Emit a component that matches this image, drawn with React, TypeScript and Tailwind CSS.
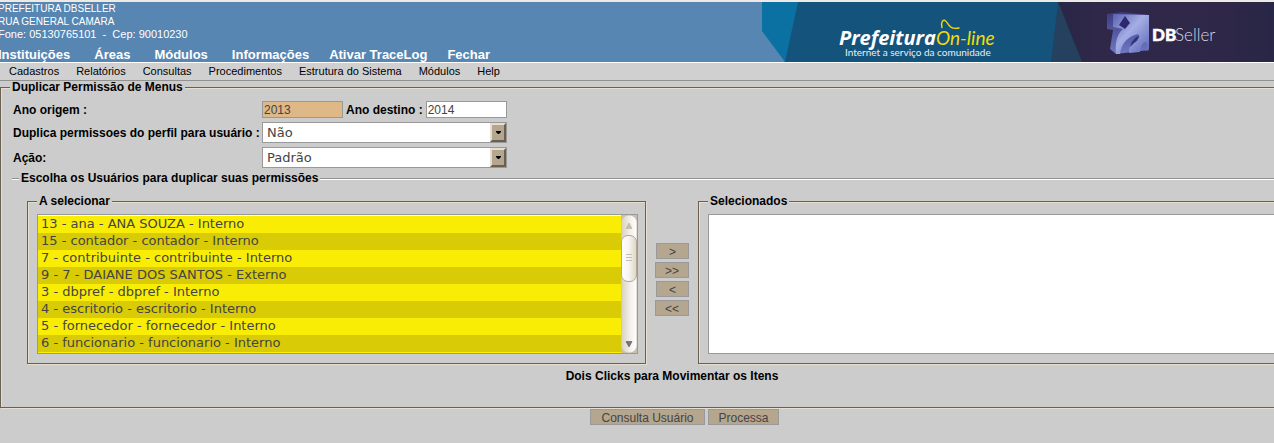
import React from "react";

const mainMenu = [
  { gap: "gap-6", items: ["Instituições", "Áreas", "Módulos", "Informações"] },
  { gap: "gap-5", items: ["Ativar TraceLog", "Fechar"] },
];
const subMenu = ["Cadastros", "Relatórios", "Consultas", "Procedimentos", "Estrutura do Sistema", "Módulos", "Help"];
const users = [
  "13 - ana - ANA SOUZA - Interno",
  "15 - contador - contador - Interno",
  "7 - contribuinte - contribuinte - Interno",
  "9 - 7 - DAIANE DOS SANTOS - Externo",
  "3 - dbpref - dbpref - Interno",
  "4 - escritorio - escritorio - Interno",
  "5 - fornecedor - fornecedor - Interno",
  "6 - funcionario - funcionario - Interno",
];

const groove =
  "border border-[#6b604f] shadow-[1px_1px_0_#e6dfd0,inset_1px_1px_0_#e6dfd0]";
const buttonStyle =
  "border border-[#999] bg-[#b5a68f] pt-px text-[12px] leading-[14px] h-[16px] text-[#444]";

function Banner() {
  return (
    <svg className="h-[60px] w-[512px] shrink-0" viewBox="762 2 512 60" role="img" aria-label="Prefeitura On-line, DBSeller">
      <defs>
        <linearGradient id="face" x1="0" y1="0" x2="1" y2="1">
          <stop offset="0" stopColor="#5a60b0" />
          <stop offset="0.45" stopColor="#a4aee4" />
          <stop offset="1" stopColor="#5a64b8" />
        </linearGradient>
        <linearGradient id="side" x1="0" y1="0" x2="0" y2="1">
          <stop offset="0" stopColor="#3c3a80" />
          <stop offset="1" stopColor="#7079c4" />
        </linearGradient>
        <linearGradient id="night" x1="0" y1="0" x2="1" y2="0">
          <stop offset="0" stopColor="#282647" />
          <stop offset="0.2" stopColor="#302848" />
          <stop offset="0.8" stopColor="#2e2747" />
          <stop offset="1" stopColor="#282646" />
        </linearGradient>
      </defs>
      <path d="M762 2H800V62H785L762 31Z" fill="#0b70a2" />
      <path d="M798 2H1060V62H785Z" fill="#14547c" />
      <path d="M1058 2L1084 62H1051Z" fill="#24425f" />
      <path d="M1058 2H1274V62H1082Z" fill="url(#night)" />
      <text x="839" y="45" fill="#fff" fontFamily="'Open Sans', sans-serif" fontSize="20" fontWeight="700" fontStyle="italic">Prefeitura</text>
      <text x="936" y="45" fill="#f2dc0a" fontFamily="Lato, sans-serif" fontSize="19" fontStyle="italic">On-line</text>
      <path d="M942 27.500C940.500 22 943 19.500 945 20.500C949 23 948 30 959 28" fill="none" stroke="#f2dc0a" strokeWidth="1.4" strokeLinecap="round" />
      <text x="845" y="56" fill="#e8f0f5" fontFamily="Lato, sans-serif" fontSize="10">Internet a serviço da comunidade</text>
      <path d="M1107 14L1122 12L1149 15V50L1116 54L1110 49L1113 30L1107 29Z" fill="url(#side)" />
      <path d="M1113 14L1149 15V50L1145 51C1148 47 1148 43 1145 42C1141 44 1141 48 1140 52L1129 53C1129 44 1133 40 1139 38C1140 35 1138 33 1135 35C1126 38 1121 45 1120 54L1116 54C1115 42 1117 34 1123 29L1113 27Z" fill="url(#face)" />
      <path d="M1125 16L1130 23L1125 29L1119 25Z" fill="#2e2872" />
      <path d="M1139 36C1134 38 1131 42 1130 47L1134 43Q1138 41 1139 36Z" fill="#34307c" />
      <text x="1152" y="41" fill="#fff" stroke="#fff" strokeWidth="0.5" fontFamily="Lato, sans-serif" fontSize="17" fontWeight="900">DB</text>
      <text x="1175" y="41" fill="#d8d6e2" fontFamily="Lato, sans-serif" fontSize="17" fontWeight="300">Seller</text>
    </svg>
  );
}

function Choice({ id, value }: { id: string; value: string }) {
  return (
    <div className="relative h-[21px] w-[245px]">
      <select id={id} className="h-[21px] w-full appearance-none border border-[#999] bg-white pl-1 font-['DejaVu_Sans',sans-serif] text-[13px] leading-[17px] font-normal text-[#444]">
        <option>{value}</option>
      </select>
      <span aria-hidden="true" className="pointer-events-none absolute top-px right-px flex h-[19px] w-4 items-center justify-center border-2 border-t-[#e6dfd0] border-r-[#6b604f] border-b-[#6b604f] border-l-[#e6dfd0] bg-[#b5a68f]">
        <svg className="h-[3px] w-[5px]" viewBox="0 0 5 3"><path d="M0 0H5V1L3 3H2L0 1Z" fill="#000" /></svg>
      </span>
    </div>
  );
}

function Scrollbar() {
  return (
    <svg aria-hidden="true" className="h-full w-4 shrink-0" viewBox="0 0 16 138" preserveAspectRatio="none">
      <defs>
        <linearGradient id="track" x1="0" x2="1">
          <stop offset="0" stopColor="#d8d0c2" />
          <stop offset="0.6" stopColor="#f4f1ec" />
          <stop offset="1" stopColor="#fff" />
        </linearGradient>
        <linearGradient id="thumb" x1="0" x2="1">
          <stop offset="0" stopColor="#fff" />
          <stop offset="0.5" stopColor="#f6f4f0" />
          <stop offset="1" stopColor="#dcd5c8" />
        </linearGradient>
      </defs>
      <rect width="16" height="138" fill="#c9bfae" />
      <rect x="0.5" y="0.5" width="15" height="137" rx="7" fill="url(#track)" />
      <path d="M8 8L11 13.5H5Z" fill="#c9bfae" stroke="#b5a68f" strokeWidth="0.5" />
      <rect x="0.5" y="20.5" width="15" height="46" rx="6.5" fill="url(#thumb)" stroke="#b5a68f" />
      <path d="M5 39.5H11M5 42.5H11M5 45.5H11" stroke="#c9bfae" />
      <path d="M5 126.5H11L8 132Z" fill="#777" stroke="#444" strokeWidth="0.5" />
    </svg>
  );
}

export default function App() {
  return (
    <div className="min-h-screen overflow-x-hidden bg-[#ccc] font-['Liberation_Sans',Arial,sans-serif] text-[12px] text-black">
      <header className="flex justify-between border-t-2 border-b border-t-[#edeae5] border-b-white bg-[#5786b2] text-white">
        <div className="-ml-0.5 flex h-[60px] flex-col justify-between">
          <div className="text-[10px] leading-[13px] whitespace-pre">
            <p>PREFEITURA DBSELLER</p>
            <p>RUA GENERAL CAMARA</p>
            <p className="text-[11px] leading-[13px]">{"Fone: 05130765101  -  Cep: 90010230"}</p>
          </div>
          <nav className="flex gap-5 text-[13px] leading-[15px] font-bold whitespace-nowrap">
            {mainMenu.map((group) => (
              <div key={group.gap} className={`flex ${group.gap}`}>
                {group.items.map((item) => <a key={item} href="#">{item}</a>)}
              </div>
            ))}
          </nav>
        </div>
        <Banner />
      </header>
      <nav className="flex h-[18px] gap-[17px] border-b border-[#919191] bg-[#d0d0d0] pl-[9px] text-[11px] leading-[17px] whitespace-nowrap">
        {subMenu.map((item) => <a key={item} href="#">{item}</a>)}
      </nav>

      <form>
        <fieldset className={`${groove} border-r-0 pb-[23px]`}>
          <legend className="ml-[9px] bg-[#ccc] px-0.5 leading-[13px] font-bold">Duplicar Permissão de Menus</legend>
          <div className="grid grid-cols-[249px_auto] items-center justify-start gap-y-1 pt-[7px] pl-3 leading-4 font-bold whitespace-nowrap">
            <label htmlFor="origem">Ano origem :</label>
            <div className="flex items-center gap-[3px]">
              <input id="origem" readOnly defaultValue="2013" className="h-[17px] w-[81px] border border-[#999] bg-[#deb887] px-px font-normal text-[#444]" />
              <label htmlFor="destino">Ano destino :</label>
              <input id="destino" defaultValue="2014" className="h-[17px] w-[81px] border border-[#999] bg-white px-px font-normal text-[#444]" />
            </div>
            <label htmlFor="duplica">Duplica permissoes do perfil para usuário :</label>
            <Choice id="duplica" value="Não" />
            <label htmlFor="acao">Ação:</label>
            <Choice id="acao" value="Padrão" />
          </div>

          <fieldset className="mt-1 ml-[11px] border-t border-[#919191] shadow-[inset_0_1px_0_#fff]">
            <legend className="ml-[7px] bg-[#ccc] px-0.5 leading-[13px] font-bold">Escolha os Usuários para duplicar suas permissões</legend>
            <div className="flex items-center pt-[10px] pl-[15px]">
              <fieldset className={`${groove} w-[619px] shrink-0 pt-1.5 pr-[7px] pb-[9px] pl-[9px]`}>
                <legend className="bg-[#ccc] px-0.5 leading-[13px] font-bold"><label htmlFor="disponiveis">A selecionar</label></legend>
                <div className="flex h-[140px] border border-[#999]">
                  <select id="disponiveis" multiple size={8} className="min-w-0 flex-1 overflow-hidden border-t border-white bg-[#f9ed05] font-['DejaVu_Sans',sans-serif] text-[13px] text-[#444] [scrollbar-width:none]">
                    {users.map((user) => <option key={user} className="h-[17px] min-h-0 px-[3px] py-0 leading-[17px] even:bg-[#d9cb05]">{user}</option>)}
                  </select>
                  <Scrollbar />
                </div>
              </fieldset>
              <div className="flex w-[52px] shrink-0 flex-col items-end gap-[3px] pr-[9px]">
                <button type="button" className={`${buttonStyle} w-[33px]`}>&gt;</button>
                <button type="button" className={`${buttonStyle} w-[34px]`}>&gt;&gt;</button>
                <button type="button" className={`${buttonStyle} w-[33px]`}>&lt;</button>
                <button type="button" className={`${buttonStyle} w-[34px]`}>&lt;&lt;</button>
              </div>
              <fieldset className={`${groove} min-w-0 flex-1 border-r-0 pt-1.5 pb-[9px] pl-[9px]`}>
                <legend className="bg-[#ccc] px-0.5 leading-[13px] font-bold"><label htmlFor="selecionados">Selecionados</label></legend>
                <select id="selecionados" multiple size={8} className="block h-[140px] w-full border border-r-0 border-[#999] bg-white" />
              </fieldset>
            </div>
            <p className="pt-1 pl-[58px] text-center leading-4 font-bold">Dois Clicks para Movimentar os Itens</p>
          </fieldset>
        </fieldset>
        <div className="mt-px flex justify-center gap-[3px] pl-[95px]">
          <button type="button" className={`${buttonStyle} w-[115px]`}>Consulta Usuário</button>
          <button type="submit" className={`${buttonStyle} w-[71px]`}>Processa</button>
        </div>
      </form>
    </div>
  );
}
